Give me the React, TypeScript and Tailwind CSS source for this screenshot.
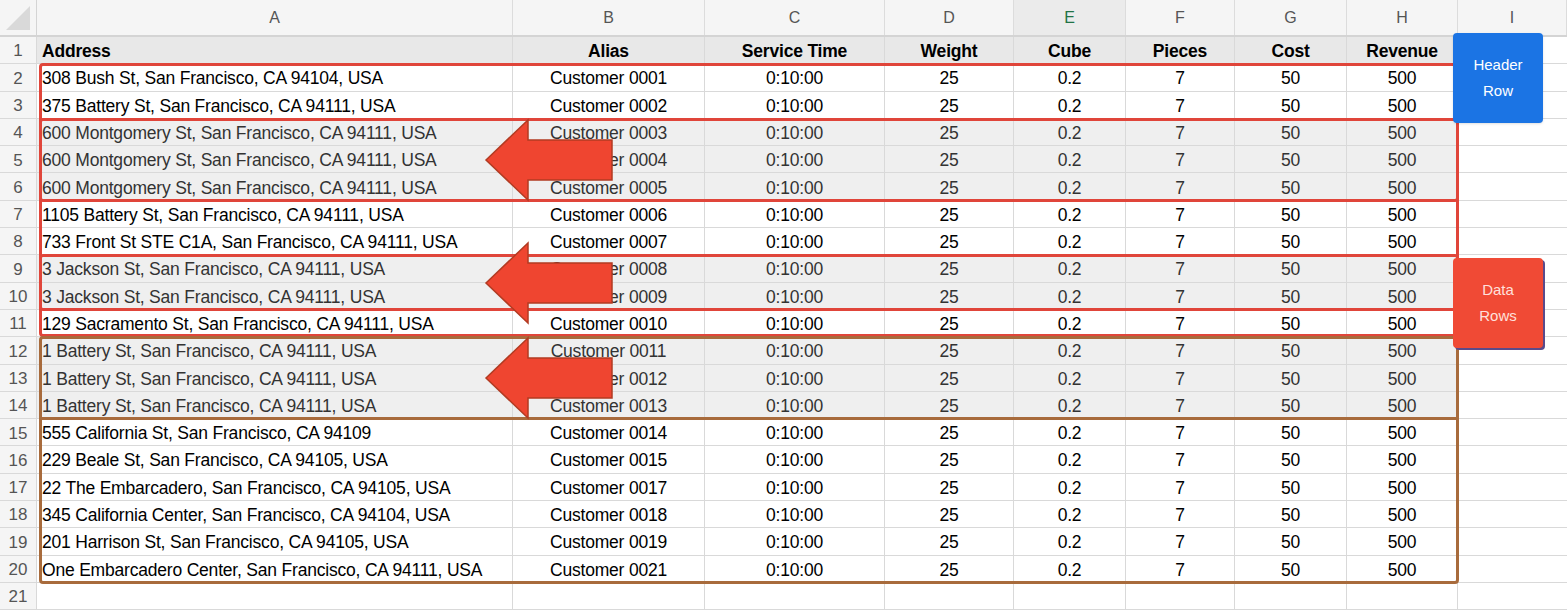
import React from "react";

const cols = ["A","B","C","D","E","F","G","H","I"];
const rows = [
  ["308 Bush St, San Francisco, CA 94104, USA","Customer 0001"],
  ["375 Battery St, San Francisco, CA 94111, USA","Customer 0002"],
  ["600 Montgomery St, San Francisco, CA 94111, USA","Customer 0003"],
  ["600 Montgomery St, San Francisco, CA 94111, USA","Customer 0004"],
  ["600 Montgomery St, San Francisco, CA 94111, USA","Customer 0005"],
  ["1105 Battery St, San Francisco, CA 94111, USA","Customer 0006"],
  ["733 Front St STE C1A, San Francisco, CA 94111, USA","Customer 0007"],
  ["3 Jackson St, San Francisco, CA 94111, USA","Customer 0008"],
  ["3 Jackson St, San Francisco, CA 94111, USA","Customer 0009"],
  ["129 Sacramento St, San Francisco, CA 94111, USA","Customer 0010"],
  ["1 Battery St, San Francisco, CA 94111, USA","Customer 0011"],
  ["1 Battery St, San Francisco, CA 94111, USA","Customer 0012"],
  ["1 Battery St, San Francisco, CA 94111, USA","Customer 0013"],
  ["555 California St, San Francisco, CA 94109","Customer 0014"],
  ["229 Beale St, San Francisco, CA 94105, USA","Customer 0015"],
  ["22 The Embarcadero, San Francisco, CA 94105, USA","Customer 0017"],
  ["345 California Center, San Francisco, CA 94104, USA","Customer 0018"],
  ["201 Harrison St, San Francisco, CA 94105, USA","Customer 0019"],
  ["One Embarcadero Center, San Francisco, CA 94111, USA","Customer 0021"],
];
const gray = new Set([4,5,6,9,10,12,13,14]);
const RH = 27.3;
const top = (n: number) => 37 + (n - 1) * RH;

function Arrow({ y }: { y: number }) {
  return (
    <svg className="absolute" style={{ left: 484, top: y - 42 }} width="132" height="84" viewBox="0 0 132 84">
      <polygon points="2,42 44,2 44,22 128,22 128,62 44,62 44,82" fill="#ef4530" stroke="#b23b22" strokeWidth="1.5" />
    </svg>
  );
}

export default function App() {
  const grid = "grid grid-cols-[37px_476px_192px_180px_129px_112px_109px_112px_111px_109px]";
  return (
    <div className="relative w-[1567px] h-[610px] overflow-hidden bg-white text-black" style={{ fontFamily: '"Liberation Sans", Arial, sans-serif' }}>
      <div className={`${grid} h-[37px] bg-[#f5f5f5] border-b-2 border-[#d4d4d4]`}>
        <div className="border-r border-[#d4d4d4] relative">
          <svg className="absolute left-[6px] top-[6px]" width="24" height="24"><polygon points="24,0 24,24 0,24" fill="#d9d9d9" /></svg>
        </div>
        {cols.map((c) => (
          <div key={c} className={`flex items-center justify-center text-[16px] border-r border-[#dcdcdc] ${c === "E" ? "bg-[#ebebeb] text-[#217346]" : "text-[#555]"}`}>{c}</div>
        ))}
      </div>
      {[0, ...rows.map((_, i) => i + 2), 21].map((n) => {
        const isHead = n === 0;
        const rn = isHead ? 1 : n;
        const r = !isHead && n <= 20 ? rows[n - 2] : null;
        const g = gray.has(rn);
        const cellBg = rn === 21 ? "bg-white" : isHead ? "bg-[#e8e8e8]" : g ? "bg-[#efefef]" : "bg-white";
        const tc = g ? "text-[#333]" : "text-black";
        const cell = `h-[27.3px] flex items-center pt-[2px] border-r border-b border-[#d9d9d9] text-[17.5px] tracking-[-0.2px] ${cellBg} ${tc} ${isHead ? "font-bold" : ""}`;
        const vals = isHead
          ? ["Service Time","Weight","Cube","Pieces","Cost","Revenue"]
          : r ? ["0:10:00","25","0.2","7","50","500"] : ["","","","","",""];
        return (
          <div key={rn} className={grid}>
            <div className="h-[27.3px] flex items-center justify-center pt-[2px] text-[17px] text-[#555] bg-[#f5f5f5] border-r border-b border-[#d9d9d9]">{rn}</div>
            <div className={`${cell} px-[5px] whitespace-nowrap`}>{isHead ? "Address" : r ? r[0] : ""}</div>
            <div className={`${cell} justify-center`}>{isHead ? "Alias" : r ? r[1] : ""}</div>
            {vals.map((v, i) => (
              <div key={i} className={`${cell} justify-center`}>{v}</div>
            ))}
            <div className="h-[27.3px] border-b border-[#d9d9d9] bg-white" />
          </div>
        );
      })}

      <div className="absolute left-[39px] w-[1420px] border-[3px] border-[#e0453a] rounded-[4px]" style={{ top: top(2) - 1, height: top(12) - top(2) + 1 }} />
      <div className="absolute left-[39px] w-[1420px] border-[3px] border-[#e0453a] rounded-[4px]" style={{ top: top(4) - 1, height: top(7) - top(4) + 2 }} />
      <div className="absolute left-[39px] w-[1420px] border-[3px] border-[#e0453a] rounded-[4px]" style={{ top: top(9) - 1, height: top(11) - top(9) + 2 }} />
      <div className="absolute left-[39px] w-[1420px] border-[3px] border-[#a86b3c] rounded-[4px]" style={{ top: top(12) - 1, height: top(21) - top(12) + 2 }} />
      <div className="absolute left-[39px] w-[1420px] h-[3px] bg-[#a86b3c]" style={{ top: top(15) - 2 }} />

      <Arrow y={top(4) + RH * 1.5} />
      <Arrow y={top(9) + RH} />
      <Arrow y={top(12) + RH * 1.5} />

      <div className="absolute left-[1453px] top-[33px] w-[90px] h-[90px] rounded-[4px] bg-[#1b74e4] text-white text-[15px] leading-[26px] flex items-center justify-center text-center shadow-sm">Header<br />Row</div>
      <div className="absolute left-[1453px] top-[258px] w-[90px] h-[90px] rounded-[4px] bg-[#f04a35] text-[#ffe0dc] text-[15px] leading-[26px] flex items-center justify-center text-center shadow-[2px_2px_0_#5b4a8a]">Data<br />Rows</div>
    </div>
  );
}
